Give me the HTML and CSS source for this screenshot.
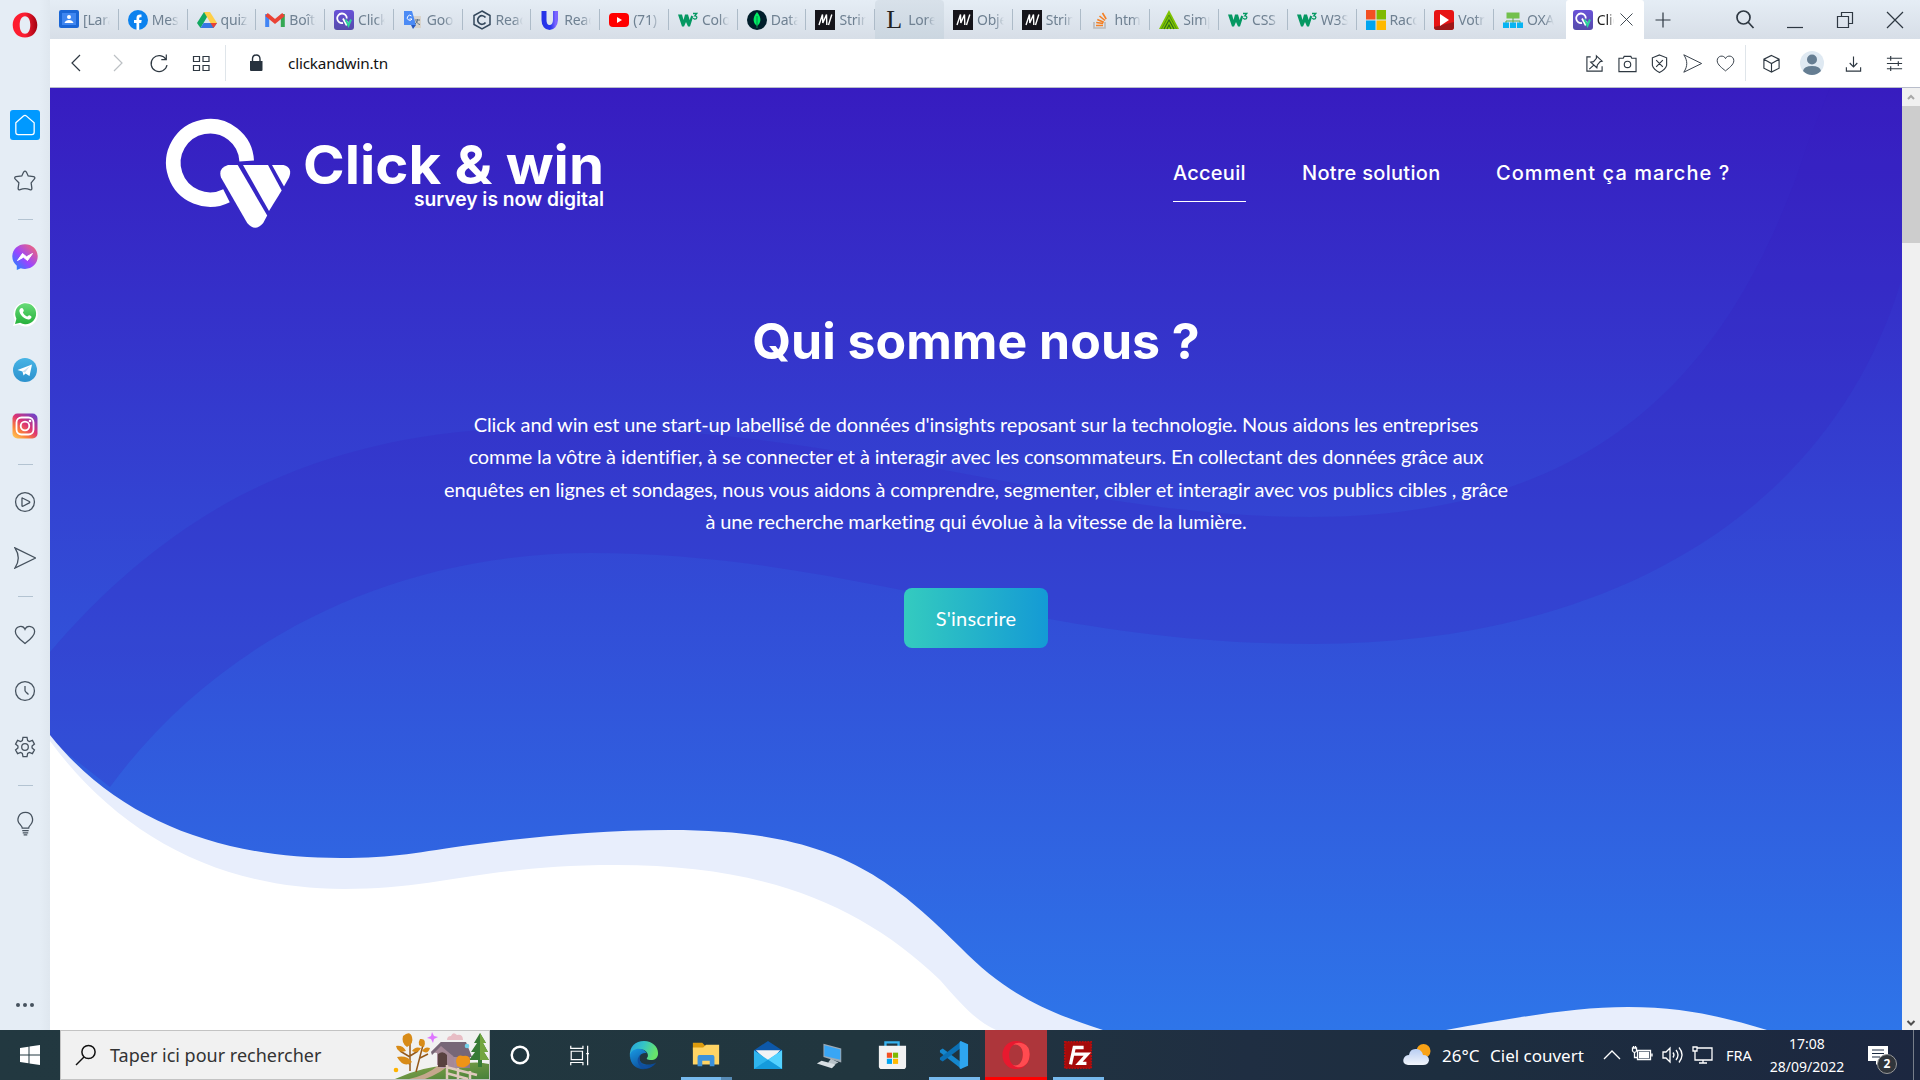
FILE: index.html
```html
<!DOCTYPE html>
<html lang="fr">
<head>
<meta charset="utf-8">
<title>Click &amp; win</title>
<link rel="stylesheet" href="styles.css">
</head>
<body>
<svg class="defs" width="0" height="0">
  <defs>
    <linearGradient id="purple" x2="0" y2="1"><stop stop-color="#6952d8"/><stop offset="1" stop-color="#554baa"/></linearGradient>
    <linearGradient id="opera" x2="1" y2="0"><stop stop-color="#ff1b2d"/><stop offset=".5" stop-color="#fa1e33"/><stop offset="1" stop-color="#a3000f"/></linearGradient>
    <linearGradient id="msg" x1="0" y1="1" x2="1" y2="0"><stop stop-color="#0a8fff"/><stop offset=".45" stop-color="#9a45ff"/><stop offset="1" stop-color="#ff6b62"/></linearGradient>
    <linearGradient id="wa" x2="0" y2="1"><stop stop-color="#68db78"/><stop offset="1" stop-color="#26b13c"/></linearGradient>
    <linearGradient id="tg" x2="0" y2="1"><stop stop-color="#47b4e5"/><stop offset="1" stop-color="#2c91cd"/></linearGradient>
    <linearGradient id="ig" x1="0" y1="1" x2=".8" y2="0"><stop stop-color="#ffd45b"/><stop offset=".3" stop-color="#fb8339"/><stop offset=".6" stop-color="#dc3374"/><stop offset="1" stop-color="#7542c4"/></linearGradient>
    <linearGradient id="sky" x2="0" y2="1"><stop stop-color="#371cc0"/><stop offset="1" stop-color="#2e75e9"/></linearGradient>
    <linearGradient id="edgeTop" x2="1" y2=".3"><stop stop-color="#249fe0"/><stop offset=".5" stop-color="#35c4c6"/><stop offset="1" stop-color="#67e46a"/></linearGradient>
    <linearGradient id="edgeLow" x2=".7" y2="1"><stop stop-color="#199be5"/><stop offset="1" stop-color="#0a438f"/></linearGradient>
    <linearGradient id="readU" x2="1" y2="0"><stop stop-color="#2633e8"/><stop offset=".6" stop-color="#2c39ec"/><stop offset="1" stop-color="#7b65ff"/></linearGradient>
    <linearGradient id="cloud" x2="0" y2="1"><stop stop-color="#b8cdf2"/><stop offset="1" stop-color="#f1f5fb"/></linearGradient>
    <linearGradient id="house" x2="1" y2="0"><stop stop-color="#c4a7b5"/><stop offset="1" stop-color="#8a7687"/></linearGradient>
    <linearGradient id="grass" x2="1" y2="1"><stop stop-color="#8aa64a"/><stop offset="1" stop-color="#47813a"/></linearGradient>
  </defs>
  <symbol id="i-click" viewBox="0 0 20 20"><rect width="20" height="20" rx="3" fill="url(#purple)"/><path d="M12.800 8.500A4.800 4.800 0 1 0 9 13" fill="none" stroke="#fff" stroke-width="1.800"/><path d="M9 8.500l3.200 6 1.800-3" stroke="#fff" stroke-width="1.800" fill="none"/><path d="M11.500 9.500l3 6L17 9.500" stroke="#2ed39b" stroke-width="2" fill="none"/></symbol>
  <symbol id="i-w3" viewBox="0 0 20 20"><path d="M0 4.500h4l1.500 5.500L7 4.500h3l1.700 5.500 1.500-4.500 2 1L12 16.500h-2L8 12l-2 4.500H4z" fill="#059862"/><path d="M15 3.500h3.800l-2 2.300c3 0 2.500 3.500-.2 3.300l-1.500-.8" fill="none" stroke="#059862" stroke-width="1.300"/></symbol>
  <symbol id="i-mdn" viewBox="0 0 20 20"><rect width="20" height="20" fill="#15141a"/><path d="M4 15L7.500 4.500 7.800 13 11.500 4.500 11.800 15M13.500 15L16.800 4.500" fill="none" stroke="#fff" stroke-width="1.400"/></symbol>
  <symbol id="i-heart" viewBox="0 0 24 24"><path d="M12 21.300C8 18 1.500 13.500 1.500 8.500 1.500 1.800 10 .8 12 5.800c2-5 10.500-4 10.500 2.700 0 5-6.500 9.500-10.500 12.800z"/></symbol>
  <symbol id="i-send" viewBox="0 0 24 24"><path d="M1 1L23.500 12 1 23c5-7.500 5-14.500 0-22z"/></symbol>
  <symbol id="i-x" viewBox="0 0 20 20"><path d="M2 2l16 16M18 2L2 18"/></symbol>
</svg>

<div class="browser">
  <aside class="side">
    <svg class="o-logo" viewBox="0 0 26 26"><path fill-rule="evenodd" d="M13 .4C20.500.4 25.300 6 25.300 13S20.500 25.600 13 25.600.7 20 .7 13 5.500.4 13 .4zM13 4.200C9.500 4.200 7.700 8 7.700 13s1.800 8.800 5.300 8.800 5.300-3.800 5.300-8.800S16.500 4.200 13 4.200z" fill="url(#opera)"/></svg>
    <div class="cell"><span class="home"><svg class="line white" viewBox="0 0 24 24"><path d="M2 9.500L10.300 2.300q1.700-1.500 3.400 0L22 9.500V20q0 2.500-2.500 2.500h-15Q2 22.500 2 20z"/></svg></span></div>
    <div class="cell"><svg class="line" viewBox="0 0 24 24"><path d="M10.500 2.200q1.500-2 3 0l2 4.300 5.800.8q2.500.8.800 2.700L18.700 14l.8 6q-.2 2.300-2.200 1.400Q12 19.300 6.700 21.400 4.700 22.300 4.500 20l.8-6L1.400 10q-1.700-1.900.8-2.700L8.500 6.500z"/></svg></div>
    <i class="sep"></i>
    <div class="cell"><svg class="app" viewBox="0 0 26 26"><path d="M13 .3C5.800.3.300 5.500.300 12.600c0 3.800 1.800 7 4.500 9.200V26l4-1.700c1.300.4 2.700.600 4.200.600 7.200 0 12.700-5.200 12.700-12.300S20.200.3 13 .3z" fill="url(#msg)"/><path d="M5.500 16.500L10.500 9.500l4 3.300 6-3.300-5 7-4-3.300z" fill="#fff" stroke="#fff"/></svg></div>
    <div class="cell"><svg class="app" viewBox="0 0 26 26"><path d="M1 25l1.800-6A12.200 12.200 0 1 1 7 23.600z" fill="#fff"/><path d="M3 23l1.400-5.300A10.500 10.500 0 1 1 8.200 21.700z" fill="url(#wa)"/><path d="M8.500 7.500c2-1.700 3 .5 3.300 2 .1 1-1.200 1.300-.8 2.200 1 1.900 2.200 2.900 4 3.700.9.300 1.300-1.500 2.300-1.200 1.500.600 3 1.400 1.700 3-1.800 2-4.500 1.200-6.700-.2-2.400-1.500-4-3.500-4.800-6.200-.4-1.400.2-2.600 1-3.300z" fill="#fff"/></svg></div>
    <div class="cell"><svg class="app" viewBox="0 0 26 26"><circle cx="13" cy="13" r="12" fill="url(#tg)"/><path d="M5.500 13L20 7.500 17.500 19l-4-2.500-2 2-1-4z" fill="#fff"/><path d="M10.500 14.500L18 9l-5 6.500z" fill="#c8dff0"/></svg></div>
    <div class="cell"><svg class="app" viewBox="0 0 26 26"><rect x=".5" y=".5" width="25" height="25" rx="5" fill="url(#ig)"/><g fill="none" stroke="#fff" stroke-width="1.800"><rect x="4.500" y="4.500" width="17" height="17" rx="5"/><circle cx="13" cy="13" r="4.300"/></g><circle cx="18" cy="8" r="1.300" fill="#fff"/></svg></div>
    <i class="sep"></i>
    <div class="cell"><svg class="line" viewBox="0 0 24 24"><circle cx="12" cy="12" r="10.300"/><path d="M8.700 8v8q.1 1 1 .6l7-3.600q1-.8 0-1.500l-7-3.600q-1-.6-1 .1z"/></svg></div>
    <div class="cell"><svg class="line" viewBox="0 0 24 24"><use href="#i-send"/></svg></div>
    <i class="sep"></i>
    <div class="cell"><svg class="line" viewBox="0 0 24 24"><use href="#i-heart"/></svg></div>
    <div class="cell"><svg class="line" viewBox="0 0 24 24"><circle cx="12" cy="12" r="10.300"/><path d="M12 6.500v5q0 1 3.800 4.200"/></svg></div>
    <div class="cell"><svg class="line" viewBox="0 0 24 24"><circle cx="12" cy="12" r="3.600"/><path d="M9.800 1.500h4.400l.7 3.600 1.800 1 3.400-1.300 2.200 4-2.600 2.200v2l2.600 2.200-2.200 4-3.400-1.300-1.800 1-.7 3.600H9.800l-.7-3.600-1.800-1-3.400 1.300-2.200-4L4.300 13v-2L1.700 8.800l2.200-4 3.400 1.300 1.800-1z"/></svg></div>
    <i class="sep"></i>
    <div class="cell"><svg class="line" viewBox="0 0 24 24"><path d="M9 17.500q0-1.500-2-3.500C1.500 9 5 .5 12.500.5S22.500 9 18 14q-2 2-2 3.500zM9 20.300h7M9.500 22.700h6M10.500 25h4"/></svg></div>
    <svg class="dots" viewBox="0 0 20 6"><circle cx="3" cy="3" r="2"/><circle cx="10" cy="3" r="2"/><circle cx="17" cy="3" r="2"/></svg>
  </aside>

  <div class="main">
    <div class="tabs">
      <div class="tab"><svg viewBox="0 0 20 20"><rect width="20" height="18" rx="2" fill="#1a66d6"/><rect x="3" y="3" width="14" height="12" fill="#3f86f0"/><circle cx="10" cy="7" r="2" fill="#fff"/><path d="M5.500 13c1-4 8-4 9 0z" fill="#fff"/></svg><span>[Lara</span></div>
      <div class="tab"><svg viewBox="0 0 20 20"><circle cx="10" cy="10" r="10" fill="#0c82ee"/><path d="M8.500 20v-7H6v-3h2.500V8c0-3 2-4 5-3.500v2.700c-2 0-2.300.2-2.300 1.300V10h2.500l-.5 3h-2v7z" fill="#fff"/></svg><span>Mess</span></div>
      <div class="tab"><svg viewBox="0 0 20 20"><path d="M7 2h6L6.500 13l-3 5L0 13z" fill="#11a861"/><path d="M7 2h6l7 11h-6.500z" fill="#ffcf48"/><path d="M6.500 13H20l-3.500 5h-13z" fill="#3777e3"/><path d="M13.500 13H20l-3.500 5z" fill="#e94335"/></svg><span>quizz</span></div>
      <div class="tab"><svg viewBox="0 0 20 20"><path d="M2.200 17V4" stroke="#4285f4" stroke-width="4"/><path d="M17.800 17V4" stroke="#34a853" stroke-width="4"/><path d="M1.500 4.500L10 11.500l8.500-7" fill="none" stroke="#ea4335" stroke-width="4"/></svg><span>Boîte</span></div>
      <div class="tab"><svg><use href="#i-click"/></svg><span>Click</span></div>
      <div class="tab"><svg viewBox="0 0 20 20"><path d="M8 6h10v12h-6z" fill="#d9d4cc"/><path d="M1 1h8l4 14H1z" fill="#4c8bf5"/><path d="M8 15h5l-3 4z" fill="#2858be"/><path d="M8.500 6A2.500 2.500 0 1 0 9 9H6.500" fill="none" stroke="#fff"/><path d="M12 10h5M14.500 9c0 3-1 4-2.500 5M13 11c1 2 2 3 4 3.500" fill="none" stroke="#607080"/></svg><span>Goog</span></div>
      <div class="tab"><svg viewBox="0 0 20 20" fill="none" stroke="#33475b"><path d="M10 1l8 4.500v9L10 19l-8-4.500v-9z" stroke-width="1.500"/><path d="M13.500 7.500a4.300 4.300 0 1 0 0 5" stroke-width="1.700"/></svg><span>React</span></div>
      <div class="tab"><svg viewBox="0 0 20 20"><path d="M4 1v9c0 10 11 10 11.500 0V1" fill="none" stroke="url(#readU)" stroke-width="5"/></svg><span>React</span></div>
      <div class="tab"><svg viewBox="0 0 20 20"><rect y="3" width="20" height="14" rx="4" fill="#f00"/><path d="M8 7l5 3-5 3z" fill="#fff"/></svg><span>(71) Y</span></div>
      <div class="tab"><svg><use href="#i-w3"/></svg><span>Color</span></div>
      <div class="tab"><svg viewBox="0 0 20 20"><circle cx="10" cy="10" r="10" fill="#001e2b"/><path d="M10 2c5 6 4 11 0 14-4-3-5-8 0-14z" fill="#00ed64"/><path d="M10 6v12" stroke="#08864a"/></svg><span>Datab</span></div>
      <div class="tab"><svg><use href="#i-mdn"/></svg><span>String</span></div>
      <div class="tab hover"><b class="letter">L</b><span>Loren</span></div>
      <div class="tab"><svg><use href="#i-mdn"/></svg><span>Objec</span></div>
      <div class="tab"><svg><use href="#i-mdn"/></svg><span>String</span></div>
      <div class="tab"><svg viewBox="0 0 20 20" fill="none"><path d="M4 12v6h11v-6" stroke="#bcbbbb" stroke-width="1.700"/><path d="M6 15.500h7M6.200 12.500l7 1M7.300 9.500l6.500 2.700M9.500 6l5.500 4.500M12.500 3l3.700 6" stroke="#f48024" stroke-width="1.600"/></svg><span>html</span></div>
      <div class="tab"><svg viewBox="0 0 20 20"><path d="M10 0l10 19H0z" fill="#7fc400"/><path d="M5 19l5-9 5 9M8 19l2-4 2 4" fill="none" stroke="#2c6a1c" stroke-width="1.100"/><path d="M2.500 19L10 5l7.500 14" fill="none" stroke="#4d8f14" stroke-width="1"/></svg><span>Simp</span></div>
      <div class="tab"><svg><use href="#i-w3"/></svg><span>CSS T</span></div>
      <div class="tab"><svg><use href="#i-w3"/></svg><span>W3Sc</span></div>
      <div class="tab"><svg viewBox="0 0 20 20"><path d="M0 0h9.500v9.500H0z" fill="#f25022"/><path d="M10.500 0H20v9.500h-9.500z" fill="#7fba00"/><path d="M0 10.500h9.500V20H0z" fill="#00a4ef"/><path d="M10.500 10.500H20V20h-9.500z" fill="#ffb900"/></svg><span>Racco</span></div>
      <div class="tab"><svg viewBox="0 0 20 20"><rect width="20" height="20" rx="3" fill="#e71313"/><path d="M20 12v5q0 3-3 3H3q-3 0-3-3z" fill="#9d1717"/><path d="M6 4l9 6-9 6z" fill="#fff"/></svg><span>Votre</span></div>
      <div class="tab last"><svg viewBox="0 0 20 20"><path d="M3.500 2.500h13v6h-13z" fill="#72c04c"/><path d="M10 8v5M3 13v-2h14v2" fill="none" stroke="#5ba84d"/><path d="M0 12.500h6V18H0zM7 12.500h6V18H7zM14 12.500h6V18h-6z" fill="#08b4f3"/></svg><span>OXAM</span></div>
      <div class="tab active"><svg><use href="#i-click"/></svg><span>Click</span><svg class="close line"><use href="#i-x"/></svg></div>
      <div class="win">
        <svg class="line plus" viewBox="0 0 20 20"><path d="M10 2.500v15M2.500 10h15"/></svg>
        <svg class="line thick" viewBox="0 0 20 20"><circle cx="8.500" cy="7.500" r="6.500"/><path d="M13 12l5.500 6"/></svg>
        <svg class="line" viewBox="0 0 20 20"><path d="M2 17.500h16"/></svg>
        <svg class="line" viewBox="0 0 20 20"><path d="M2.500 6.500h11v11h-11zM6.500 6.500v-4h11v11h-4"/></svg>
        <svg class="line" viewBox="0 0 20 20"><path d="M2 2l16 16M18 2L2 18"/></svg>
      </div>
    </div>

    <div class="address">
      <svg class="line" viewBox="0 0 20 20"><path d="M14 2L6 10l8 8"/></svg>
      <svg class="line faint" viewBox="0 0 20 20"><path d="M6 2l8 8-8 8"/></svg>
      <svg class="line" viewBox="0 0 20 20"><path d="M17 6.500A8 8 0 1 0 18 12M17.300 1.500v5.200h-5"/></svg>
      <svg class="line" viewBox="0 0 20 20"><path d="M2.500 3.500h6v5h-6zM12 3.500h6v5h-6zM2.500 12.500h6v5h-6zM12 12.500h6v5h-6z"/></svg>
      <i class="bar"></i>
      <svg class="lock" viewBox="0 0 20 20"><path d="M4 8h12.500v9q0 1-1 1H5q-1 0-1-1z" fill="#27323e"/><path d="M6.500 9V6q0-4 3.700-4T14 6v3" fill="none" stroke="#27323e" stroke-width="1.400"/></svg>
      <span class="url">clickandwin.tn</span>
      <div class="tools">
        <svg class="line" viewBox="0 0 20 20"><path d="M6 3H2v15h16v-5M12 2l6 5.500-2 .5-3 3.500-.5 3-6.500-6 3-.5 3-3.500zM9.500 11.500l-5 4.500"/></svg>
        <svg class="line" viewBox="0 0 20 20"><path d="M1 4.500h4.500l1-2h7l1 2H19v14H1z"/><circle cx="10" cy="11" r="3.400"/></svg>
        <svg class="line" viewBox="0 0 20 20"><path d="M10 1l7.500 3v8q-1 4-7.500 7.500-6.500-3.500-7.500-7.500V4zM6.500 6.500l7 7M13.500 6.500l-7 7"/></svg>
        <svg class="line" viewBox="0 0 24 24"><use href="#i-send"/></svg>
        <svg class="line" viewBox="0 0 24 24"><use href="#i-heart"/></svg>
      </div>
      <i class="bar"></i>
      <div class="tools wide">
        <svg class="line" viewBox="0 0 20 20"><path d="M10 1.500l8 4v9.500l-8 4-8-4V5.500zM2 5.500l8 4.500 8-4.500M10 10v9"/></svg>
        <svg class="avatar" viewBox="0 0 24 24"><circle cx="12" cy="12" r="12" fill="#dfe9f2"/><circle cx="12" cy="8.500" r="5" fill="#657d92"/><path d="M3 20q1-5 9-5t9 5q-4 4-9 4t-9-4z" fill="#657d92"/></svg>
        <svg class="line" viewBox="0 0 20 20"><path d="M10 2.500v11M6 9.500l4 4 4-4M2.500 14v4h15v-4"/></svg>
        <svg class="line" viewBox="0 0 20 20"><path d="M2 4.500h16M2 10h16M2 15.500h16M6 2v5M14 7.500v5M6 13v5"/></svg>
      </div>
    </div>

    <div class="viewport">
      <div class="page">
        <svg class="waves" viewBox="50 88 1852 942">
          <rect x="50" y="88" width="1852" height="942" fill="url(#sky)"/>
          <path d="M50 652C180 500 330 430 540 427C850 423 1060 517 1310 517C1600 517 1735 370 1809 140L1830 88H1902V278C1830 520 1600 644 1313 644C1030 644 850 553 591 553C380 553 210 650 110 787L50 740z" fill="#371cc0" opacity=".2"/>
          <path d="M50 735C120 823 225 858 340 858C395 858 420 852 470 845C530 837 600 830 670 830C826 830 884 871 960 947C1003 991 1040 1010 1103 1030H50zM1446 1030C1510 1019 1570 1007 1628 1007C1686 1007 1727 1018 1767 1030z" fill="#e8eefc"/>
          <path d="M50 741C120 836 220 889 344 889C440 889 485 865 616 865C765 865 862 905 940 980C963 1006 975 1020 996 1030H50z" fill="#fff"/>
        </svg>
        <header class="top">
          <svg class="brand" viewBox="0 0 450 115" width="450" height="115">
            <path d="M80.700 42A36.700 36.700 0 1 0 60.500 76.700" fill="none" stroke="#fff" stroke-width="14.600"/>
            <g fill="#fff"><path d="M62 46h9.700l29.500 50.500-4 7.500q-8 9.500-16 0L55 58.500Q52 49 62 46z"/><path d="M77 46h25l13.700 25.500L103 92z"/><path d="M106 46h11.500q9.500 2.500 5.500 12.500l-5 9z"/></g>
            <text class="name" x="137" y="65" textLength="301" lengthAdjust="spacingAndGlyphs">Click &amp; win</text>
            <text class="tag" x="248" y="87" textLength="190" lengthAdjust="spacingAndGlyphs">survey is now digital</text>
          </svg>
          <nav><a class="on n1">Acceuil</a><a class="n2">Notre solution</a><a class="n3">Comment ça marche ?</a></nav>
        </header>
        <section class="hero">
          <h1>Qui somme nous ?</h1>
          <p>Click and win est une start-up labellisé de données d'insights reposant sur la technologie. Nous aidons les entreprises<br>comme la vôtre à identifier, à se connecter et à interagir avec les consommateurs. En collectant des données grâce aux<br>enquêtes en lignes et sondages, nous vous aidons à comprendre, segmenter, cibler et interagir avec vos publics cibles , grâce<br>à une recherche marketing qui évolue à la vitesse de la lumière.</p>
          <a class="cta">S'inscrire</a>
        </section>
      </div>
      <div class="scroll"><svg viewBox="0 0 18 18"><path d="M6 11l3-3 3 3" stroke="#a8a8a8"/></svg><i></i><svg class="down" viewBox="0 0 18 18"><path d="M5.500 9L9 12.500 12.500 9" stroke="#505050"/></svg></div>
    </div>
  </div>
</div>

<footer class="taskbar">
  <div class="start"><svg viewBox="0 0 20 20" width="20" height="20"><path d="M0 3l8.500-1.300v7.800H0zM9.500 1.500L20 0v9.500H9.500zM0 10.500h8.500v7.800L0 17zM9.500 10.500H20V20L9.500 18.500z" fill="#fff"/></svg></div>
  <div class="search">
    <svg class="lens" viewBox="0 0 22 22"><circle cx="13.500" cy="8" r="6.600"/><path d="M9 13l-8 8"/></svg>
    <span>Taper ici pour rechercher</span>
    <svg class="scene" viewBox="0 0 94 47">
      <path d="M0 47q30-14 56-13 24-6 38-2v15z" fill="url(#grass)"/>
      <path d="M14 47q18-4 30-14h9Q48 40 30 47z" fill="#c5a78d"/>
      <g stroke="#95591b" stroke-width="1.500" fill="none"><path d="M15 39V12M15 25L5 19M15 32l-9-4M15 24l8-5M21 40l7-27M25 26l8-4"/></g>
      <g fill="#d88b18"><path d="M8 4q7-6 9 1 2 7-5 10-6-4-4-11zM1 14q7-1 10 5-8 3-10-5zM17 19q3-5 9-3-3 6-9 3zM2 25q10-2 15 5-8 7-15-5zM25 7q7-1 4 8-8-1-4-8zM27 19q3-5 8-3-2 7-8 3z"/></g>
      <path d="M42 24h33v12H45z" fill="url(#house)"/><path d="M36 20L46 10 59 25v11l-17-3V21z" fill="#a58997"/><path d="M36 20L46 10h25l6 15H59L46 14l-9 9z" fill="#776777"/><path d="M43 22q5-4 9 1v12h-9z" fill="#59413f"/>
      <path d="M85 1l-6 10h3l-6 9h4l-6 8h9v7h4v-7h7l-5-8h4l-5-9h3z" fill="#377b36"/><path d="M85 1l6 10h-3l5 9h-4l5 8h-9z" fill="#73a53f"/>
      <path d="M61 29q1-7 7-5 8-2 7 7-5 7-13 3z" fill="#ee9417"/>
      <path d="M41 9q0-4 4-4 2-5 6-1 6-1 6 5z" transform="translate(11 -1)" fill="#e8bdc5"/>
      <path d="M37 0l2 4 4 1-4 2-1 4-2-4-4-1 4-2z" fill="#de76ff"/><circle cx="72" cy="14" r="2.300" fill="#74d1e9"/><circle cx="1" cy="38" r="2.300" fill="#ffb300"/>
      <path d="M52 33v14M63 36v11M75 39v8M51 35l31 8M51 41l22 6" stroke="#dfc9bd" stroke-width="2.500" fill="none"/>
    </svg>
  </div>
  <div class="apps">
    <div><svg viewBox="0 0 32 32"><ellipse cx="16" cy="16" rx="8.800" ry="8.800" fill="none" stroke="#fff" stroke-width="2.600"/></svg></div>
    <div><svg viewBox="0 0 32 32" fill="none" stroke="#fff" stroke-width="1.300"><path d="M4 6v3h13V6M4.500 12h12v9h-12zM4 27v-3h13v3M22 6v21M20.500 14.500h3" /></svg></div>
    <div><svg viewBox="0 0 32 32"><path d="M1 18C0 7 7 1 16 1c9 0 15 6 15 13 0 6-5 8-10 7-3-.6-2-2-1-3 2-6-8-11-14-6z" fill="url(#edgeTop)"/><path d="M1 16c2-8 14-9 18-2-8-1-10 6-6 10 4 3 11 3 16 0C22 35 1 34 1 16z" fill="url(#edgeLow)"/><path d="M13 15c-5 6 2 17 13 12-11 9-23-4-13-12z" fill="#114f9e"/></svg></div>
    <div class="open split"><svg viewBox="0 0 32 32"><path d="M2 3h10l3 3v5H2z" fill="#dd9b0d"/><path d="M2 8h11l3-3h14v21H2z" fill="#ffd464"/><path d="M7 28V18q0-2 2-2h14q2 0 2 2v10h-5v-6h-8v6z" fill="#3c92dc"/></svg></div>
    <div><svg viewBox="0 0 32 32"><path d="M1 11L16 1l15 10v8H1z" fill="#0d58a9"/><path d="M3 11h26L17 24z" fill="#f2f3f5"/><path d="M1 11l15 10 15-10v20H1z" fill="#2fb5ee"/><path d="M31 11v20L16 21z" fill="#54d2ff"/><path d="M1 31l15-10 15 10z" fill="#159bdc"/></svg></div>
    <div><svg viewBox="0 0 32 32"><path d="M9 4l19 5v15L9 18z" fill="#9eaab4"/><path d="M10 5.500l17 4.500v11L10 17z" fill="#39a6f5"/><path d="M17 20l8 4-6 3-5-3z" fill="#b8c2c8"/><path d="M2 25l5-3 15 4-4 4z" fill="#d8dfe3"/></svg></div>
    <div><svg viewBox="0 0 32 32"><path d="M9 7V2.500h14V7" fill="none" stroke="#37b2ef" stroke-width="2.500"/><path d="M2 6h29v22q0 3-3 3H5q-3 0-3-3z" fill="#f2f2f2"/><path d="M10.500 13.500H16V19h-5.500z" fill="#f25022"/><path d="M17 13.500h5.500V19H17z" fill="#7fba00"/><path d="M10.500 20H16v5.500h-5.500z" fill="#00a4ef"/><path d="M17 20h5.500v5.500H17z" fill="#ffb900"/></svg></div>
    <div class="open"><svg viewBox="0 0 32 32"><path d="M1 11l3-2 20 15v7L1 13z" fill="#1587ce"/><path d="M1 21l3 2L24 8V1L1 19z" fill="#0b70b5"/><path d="M23 1l8 3.500v23L23 31l-1-1V2z" fill="#2ea5ef"/></svg></div>
    <div class="opera"><svg viewBox="0 0 32 32"><path fill-rule="evenodd" d="M16 1C25 1 30.500 8 30.500 16S25 31 16 31 1.500 24 1.500 16 7 1 16 1zM16 4.500c-4.500 0-7.300 5.500-7.300 11.500s2.800 11.500 7.300 11.500S23.300 22 23.300 16 20.500 4.500 16 4.500z" fill="#e8192f"/><path d="M12 6Q17 1 24 4t6.500 12T24 28t-12-2q4 2.500 7.500-.5T23.300 16 19.500 6.500 12 6z" fill="#ff4b50"/></svg></div>
    <div class="open fz"><svg viewBox="0 0 32 32"><rect x="2" y="2" width="28" height="28" fill="#a50b0b" stroke="#b90d0d" stroke-width="2" stroke-dasharray="2 1"/><path d="M8 26l4-18h10M10.500 15h9M18 15h8l-9 10h8" fill="none" stroke="#fff" stroke-width="3.500"/></svg></div>
  </div>
  <div class="tray">
    <svg class="weather" viewBox="0 0 28 22"><circle cx="20.500" cy="7" r="7" fill="#f9a216"/><path d="M5 21q-6-1-4.500-6Q2 11 6 11q1-7 8-6 5 1 6 6 6 0 6 5.500Q25 21 20 21z" fill="url(#cloud)"/></svg>
    <span class="temp">26°C</span><span class="sky">Ciel couvert</span>
    <svg class="chev ti" viewBox="0 0 20 20"><path d="M2 14l8-8 8 8"/></svg>
    <svg class="ti" viewBox="0 0 20 20"><path d="M5.500 5.500h13v9h-13zM20 8.500v3M.5 3h4v3q-2 3-4 0zM1.500 1v2M3.500 1v2M2.500 8v4.500h3"/><path d="M7.500 7.500h9v5h-9z" fill="#fff"/></svg>
    <svg class="ti" viewBox="0 0 20 20"><path d="M1 7h3l4-4v14l-4-4H1zM11 7.500q2 2.500 0 5M14 5q4 5 0 10M17 2.500q6 7 0 15"/></svg>
    <svg class="ti" viewBox="0 0 20 20"><path d="M5 3h15v12H3V8M11 15v3M7 18h8M1 2h4v4H1zM3 6v4"/></svg>
    <span class="lang">FRA</span>
    <div class="clock"><span>17:08</span><span>28/09/2022</span></div>
    <div class="note"><svg viewBox="0 0 20 20"><path d="M0 1h20v15h-8l-4 4v-4H0z" fill="#fff"/><path d="M4 5h12M4 8.500h12M4 12h8" stroke="#1c2b42" stroke-width="1.200"/></svg><b>2</b></div>
    <i class="edge"></i>
  </div>
</footer>
</body>
</html>
```
FILE: styles.css
```css
*{box-sizing:border-box}
body{margin:0;width:1920px;height:1080px;overflow:hidden;font-family:"Noto Sans","Open Sans",sans-serif;color:#111}
svg{flex:none;display:block;overflow:visible}
.defs{position:absolute}
.line{fill:none;stroke:#2e3842;stroke-width:1.2}
.browser{display:flex;height:1030px}

.side{width:50px;height:1030px;background:linear-gradient(90deg,#e5edf5 80%,#dfe7ef);display:flex;flex-direction:column;align-items:center}
.o-logo{width:26px;height:26px;margin:12px 0 59px}
.cell{height:56.2px;display:flex;align-items:center;justify-content:center}
.cell .line{width:22px;height:22px;stroke:#46525e;stroke-width:1.4;margin-right:1px}
.cell .app{width:26px;height:26px}
.home{width:30px;height:30px;border-radius:3px;background:#0099ff;display:flex;align-items:center;justify-content:center}
.home .line.white{stroke:#fff;margin:0}
.sep{height:1px;width:15px;margin:9.5px 0;background:#b3c3d1;flex:none}
.dots{width:20px;height:6px;margin-top:auto;margin-bottom:22px;fill:#46525e}

.main{width:1870px;display:flex;flex-direction:column}
.tabs{height:39px;display:flex;background:linear-gradient(#e5edf5,#d7dee7)}
.tab{width:68.77px;flex:none;display:flex;align-items:center;padding-left:9px;position:relative}
.tab>svg:first-child{width:20px;height:20px}
.tab::after{content:"";width:1px;height:21px;background:#adbbc8;margin-left:auto}
.tab span{margin-left:4px;width:27px;overflow:hidden;white-space:nowrap;font-size:14px;letter-spacing:-.2px;color:#6f8192;-webkit-mask-image:linear-gradient(90deg,#000 65%,transparent);mask-image:linear-gradient(90deg,#000 65%,transparent)}
.tab.hover{background:linear-gradient(#d8e1ea,#cbd6e0);border-radius:4px 4px 0 0}
.tab.hover::after,.tab.last::after,.tab.active::after{display:none}
.letter{width:20px;text-align:center;font:400 26px/28px "Liberation Serif",serif;color:#222}
.tab.active{width:78px;margin-left:3px;background:#fff;border-radius:3px 3px 0 0;padding-left:7px}
.tab.active span{color:#222;width:17px}
.close{width:15px;height:15px;margin-left:5px}
.win{flex:1;display:flex;align-items:center;justify-content:flex-end;gap:30px;padding-right:15px}
.win svg{width:20px;height:20px}
.win .plus{margin-right:auto;margin-left:9px}
.win .thick{stroke-width:1.7}

.address{height:49px;background:#fff;border-bottom:1px solid #b8bdca;display:flex;align-items:center;padding-left:16px}
.address svg{width:20px;height:20px;margin-right:21.500px}
.address .faint{stroke:#bcc0c4}
.bar{width:1px;height:36px;background:#dfe5ea;flex:none}
.address .bar:first-of-type{margin-left:-7px}
.address .lock{margin:0 22px 0 20px}
.url{font-size:15.300px;letter-spacing:-.2px}
.tools{margin-left:auto;display:flex;align-items:center;gap:13.600px;margin-right:10px}
.address .tools svg{margin:0}
.address .tools .line{width:19px;height:19px}
.tools.wide{margin-left:16px;margin-right:16px;gap:19.500px}
.address .tools.wide svg:last-child{margin-left:3px}
.address .tools .avatar{width:24px;height:24px}

.viewport{height:942px;display:flex}
.page{width:1852px;height:942px;position:relative;overflow:hidden;color:#fff}
.waves{position:absolute;inset:0;width:1852px;height:942px}
.top,.hero{position:relative}
.top{height:171px;display:flex;justify-content:space-between;padding:31px 172px 0 116px}
.brand .name{font:700 54px Inter,sans-serif;fill:#fff}
.brand .tag{font:600 19.500px Inter,sans-serif;fill:#fff}
nav{display:flex;gap:56px;padding-top:33px;font:500 20px/42px Inter,sans-serif}
nav a{height:50px;white-space:nowrap}
.on{border-bottom:1px solid #fff}
.n1{width:73px;letter-spacing:.25px}.n2{width:138px;letter-spacing:.3px}.n3{width:234px;letter-spacing:1.050px}
.hero{display:flex;flex-direction:column;align-items:center;text-align:center}
h1{margin:46px 0 0;font:700 50px/72px Inter,sans-serif;white-space:nowrap}
.hero p{margin:31px 0 0;font:400 20px/32.400px Lato,sans-serif;letter-spacing:-.135px;white-space:nowrap}
.cta{margin-top:50px;width:144px;height:60px;border-radius:8px;background:linear-gradient(90deg,#34cbbf,#149ad5);font:400 20px/61px Lato,sans-serif;letter-spacing:.2px}
.scroll{width:18px;background:#f0f0f0;display:flex;flex-direction:column;align-items:center}
.scroll svg{width:18px;height:18px;fill:none;stroke-width:2}
.scroll i{width:18px;height:137px;background:#cdcdcd}
.scroll .down{margin-top:auto}

.taskbar{height:50px;display:flex;background:linear-gradient(90deg,#223840,#21363f 45%,#1f2e42 65%,#1d2e3f 75%,#1c2740);color:#fff}
.start{width:60px;display:flex;align-items:center;justify-content:center}
.search{width:430px;background:#f1f1f1;border:1px solid #c3c3c3;display:flex;align-items:center;color:#333;font-size:18px}
.lens{width:22px;height:22px;margin-left:14px;fill:none;stroke:#111;stroke-width:1.500}
.search span{margin-left:13px;white-space:nowrap}
.scene{width:94px;height:47px;margin-left:auto}
.apps{display:flex;margin-left:-1.500px}
.apps>div{width:62px;height:50px;display:flex;align-items:center;justify-content:center;position:relative}
.apps svg{width:30px;height:30px}
.apps .open::after{content:"";position:absolute;bottom:0;left:6px;width:51px;height:3px;background:#76b9ed}
.apps .split::after{background:linear-gradient(90deg,#76b9ed 78%,#568ab4 79%)}
.apps .opera{background:#ad363b;border-bottom:3px solid #f00;padding-top:3px}
.tray{display:flex;align-items:center;margin-left:auto;font-size:17px;white-space:nowrap}
.weather{width:28px;height:22px;margin-right:11px}
.temp{width:48px}.sky{width:108px}
.ti{width:20px;height:20px;margin-right:10px;fill:none;stroke:#fff;stroke-width:1.300}
.chev{margin-left:4px}
.lang{width:36px;font-size:14.500px;margin-left:4px}
.clock{width:90px;display:flex;flex-direction:column;align-items:center;font-size:14px;line-height:23px}
.note{margin-left:16px;position:relative}
.note svg{width:20px;height:20px}
.note b{position:absolute;left:9px;top:9px;width:20px;height:20px;border-radius:50%;border:1px solid #999;background:#30353b;font-size:12px;line-height:18px;text-align:center}
.edge{width:1px;height:50px;margin:0 6px 0 25px;background:#777e8a}
```
